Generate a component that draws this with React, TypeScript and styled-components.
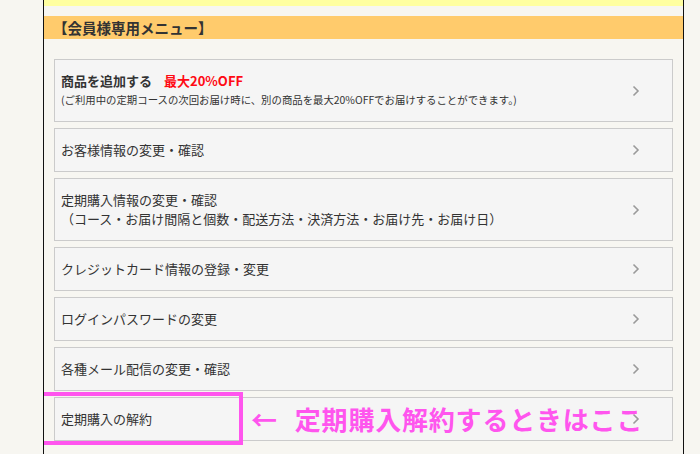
import React from "react";
import styled, { createGlobalStyle } from "styled-components";

const GlobalStyle = createGlobalStyle`
  html, body {
    margin: 0;
    padding: 0;
    background: #f7f6f1;
    font-family: "Noto Sans CJK JP", "Noto Sans", sans-serif;
    color: #333;
  }
`;

type MenuEntry = {
  title: string;
  note?: string;
};

const entries: MenuEntry[] = [
  { title: "お客様情報の変更・確認" },
  {
    title: "定期購入情報の変更・確認",
    note: "（コース・お届け間隔と個数・配送方法・決済方法・お届け先・お届け日）",
  },
  { title: "クレジットカード情報の登録・変更" },
  { title: "ログインパスワードの変更" },
  { title: "各種メール配信の変更・確認" },
];

const Chevron = () => (
  <Arrow width="8" height="12" viewBox="0 0 8 12">
    <path d="M1.5 1.5 L6 6 L1.5 10.5" fill="none" stroke="#9a9a9a" strokeWidth="1.6" />
  </Arrow>
);

export default function App() {
  return (
    <>
      <GlobalStyle />
      <Panel>
        <TopStrip />
        <Header>【会員様専用メニュー】</Header>
        <MenuList>
          <Item>
            <Texts>
              <BoldLine>
                商品を追加する<Red>最大20%OFF</Red>
              </BoldLine>
              <SmallNote>
                (ご利用中の定期コースの次回お届け時に、別の商品を最大20%OFFでお届けすることができます。)
              </SmallNote>
            </Texts>
            <Chevron />
          </Item>
          {entries.map((e) => (
            <Item key={e.title}>
              <Texts>
                <Line>{e.title}</Line>
                {e.note && <Line>{e.note}</Line>}
              </Texts>
              <Chevron />
            </Item>
          ))}
          <Item>
            <Texts>
              <Line>定期購入の解約</Line>
            </Texts>
            <Chevron />
            <Highlight />
            <Callout>
              <span>←</span>
              <span>定期購入解約するときはここ</span>
            </Callout>
          </Item>
        </MenuList>
      </Panel>
    </>
  );
}

const Panel = styled.div`
  box-sizing: border-box;
  width: 641px;
  margin-left: 43px;
  height: 454px;
  overflow: hidden;
  border-left: 1px solid #111;
  border-right: 1px solid #111;
`;

const TopStrip = styled.div`
  height: 6px;
  background: #ffffa0;
  margin-bottom: 10px;
`;

const Header = styled.div`
  height: 23px;
  line-height: 23px;
  background: #ffcb6c;
  padding-left: 9px;
  font-size: 14.5px;
  font-weight: bold;
  color: #333;
`;

const MenuList = styled.div`
  display: flex;
  flex-direction: column;
  gap: 6px;
  padding: 20px 10px 0;
`;

const Item = styled.div`
  position: relative;
  display: flex;
  align-items: center;
  justify-content: space-between;
  padding: 13px 32px 13px 6px;
  background: #f5f5f5;
  border: 1px solid #cbcbcb;
`;

const Texts = styled.div`
  display: flex;
  flex-direction: column;
  gap: 3px;
`;

const Line = styled.div`
  font-size: 13px;
  line-height: 16px;
  color: #333;
`;

const BoldLine = styled.div`
  font-size: 13px;
  line-height: 16px;
  font-weight: bold;
  color: #333;
`;

const Red = styled.span`
  color: #ff0a14;
  margin-left: 12px;
`;

const SmallNote = styled.div`
  font-size: 10.4px;
  line-height: 16px;
  color: #333;
`;

const Arrow = styled.svg`
  display: block;
  flex-shrink: 0;
`;

const Highlight = styled.div`
  position: absolute;
  left: -16px;
  top: -6px;
  width: 204px;
  height: 53px;
  box-sizing: border-box;
  border: 4px solid #ff55ee;
  pointer-events: none;
`;

const Callout = styled.div`
  position: absolute;
  left: 196px;
  top: 50%;
  transform: translateY(-50%);
  display: flex;
  gap: 17px;
  font-size: 26px;
  font-weight: bold;
  letter-spacing: 0.8px;
  color: #ff55ee;
  white-space: nowrap;
  line-height: 30px;
`;
